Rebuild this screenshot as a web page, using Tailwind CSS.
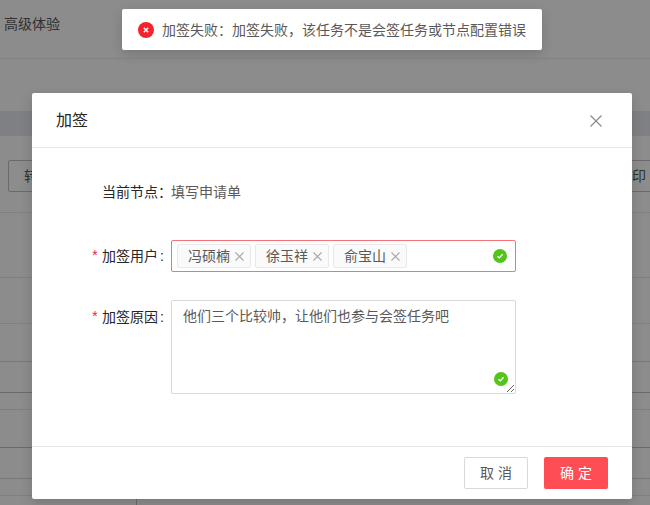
<!DOCTYPE html>
<html lang="zh-CN">
<head>
    <meta charset="UTF-8">
    <title>加签</title>
    <script src="https://cdn.jsdelivr.net/npm/@tailwindcss/browser@4"></script>
</head>
<body class="relative h-[505px] w-[650px] overflow-hidden bg-white font-['Liberation_Sans','Noto_Sans_CJK_SC',sans-serif] text-sm text-[#595959]">
    <!-- page behind the mask -->
    <div class="flex h-[505px] flex-col">
        <div class="h-[59px] border-b border-[#f0f0f0] pl-1 pt-[14px] leading-5">高级体验</div>
        <div class="mt-[52px] h-[25px] bg-[#e6eaee]"></div>
        <div class="flex h-[77px] items-start justify-between border-b border-[#e8e8e8] pt-6">
            <div class="ml-2 h-8 w-[100px] rounded-[2px] border border-[#c4c4c4] pl-[15px] leading-[30px]">转</div>
            <div class="h-8 w-[100px] whitespace-nowrap border-y border-[#c4c4c4] pr-1 text-right leading-[30px]">印</div>
        </div>
        <div class="h-[65px] border-b border-[#e8e8e8]"></div>
        <div class="h-[46px] border-b border-[#e8e8e8]"></div>
        <div class="h-[38px] border-b border-[#d9d9d9]"></div>
        <div class="h-[31px] border-b border-[#c4c4c4]"></div>
        <div class="h-[17px] border-b border-[#e8e8e8]"></div>
        <div class="h-[38px] border-b border-[#c4c4c4]"></div>
        <div class="h-[31px] border-b border-[#d9d9d9]"></div>
        <div class="h-[17px] border-b border-[#e8e8e8]"></div>
        <div class="ml-[136px] flex-1 border-l border-[#c4c4c4]"></div>
    </div>

    <!-- mask -->
    <div class="absolute inset-0 bg-black/45"></div>

    <!-- modal -->
    <div class="absolute left-[32px] top-[93px] flex h-[406px] w-[600px] flex-col rounded-[2px] bg-white shadow-[0_4px_12px_rgba(0,0,0,0.15)]">
        <div class="flex h-[55px] items-center justify-between border-b border-[#e8e8e8] pl-6 pr-[30px]">
            <span class="pt-0.5 text-base text-[#262626]">加签</span>
            <svg class="mt-0.5 h-[12px] w-[12px] text-[#8c8c8c]" viewBox="0 0 12 12" fill="none" stroke="currentColor" stroke-width="1.3"><path d="M0.5 0.5L11.5 11.5M11.5 0.5L0.5 11.5"/></svg>
        </div>

        <div class="flex-1 pt-7">
            <div class="mb-8 flex h-8 items-center">
                <div class="-mr-px w-[140px] text-right text-[#262626]">当前节点：</div>
                <div>填写申请单</div>
            </div>

            <div class="mb-7 flex h-8 items-center">
                <div class="w-[139px] pr-[7px] text-right text-[#262626]"><span class="mr-[3px] font-['Liberation_Mono',monospace] text-[#f5222d]">*</span>加签用户<span class="ml-0.5">:</span></div>
                <div class="relative flex h-8 w-[345px] items-center gap-1 rounded-[2px] border border-[#f5727a] pl-[5px]">
                    <span class="flex h-6 w-[74px] items-center rounded-[2px] border border-[#e8e8e8] bg-[#fafafa] pl-2.5">冯硕楠
                        <svg class="ml-[5px] h-[9px] w-[9px] text-[#a6a6a6]" viewBox="0 0 9 9" fill="none" stroke="currentColor" stroke-width="1.1"><path d="M0.5 0.5L8.5 8.5M8.5 0.5L0.5 8.5"/></svg>
                    </span>
                    <span class="flex h-6 w-[74px] items-center rounded-[2px] border border-[#e8e8e8] bg-[#fafafa] pl-2.5">徐玉祥
                        <svg class="ml-[5px] h-[9px] w-[9px] text-[#a6a6a6]" viewBox="0 0 9 9" fill="none" stroke="currentColor" stroke-width="1.1"><path d="M0.5 0.5L8.5 8.5M8.5 0.5L0.5 8.5"/></svg>
                    </span>
                    <span class="flex h-6 w-[74px] items-center rounded-[2px] border border-[#e8e8e8] bg-[#fafafa] pl-2.5">俞宝山
                        <svg class="ml-[5px] h-[9px] w-[9px] text-[#a6a6a6]" viewBox="0 0 9 9" fill="none" stroke="currentColor" stroke-width="1.1"><path d="M0.5 0.5L8.5 8.5M8.5 0.5L0.5 8.5"/></svg>
                    </span>
                    <svg class="absolute right-[8px] top-[8px] h-[14px] w-[14px]" viewBox="0 0 14 14"><circle cx="7" cy="7" r="7" fill="#52c41a"/><path d="M4.5 7.2L6.3 8.9L9.6 5.3" fill="none" stroke="#fff" stroke-width="1.3"/></svg>
                </div>
            </div>

            <div class="flex items-start">
                <div class="w-[139px] pr-[7px] pt-[6px] text-right leading-[22px] text-[#262626]"><span class="mr-[3px] font-['Liberation_Mono',monospace] text-[#f5222d]">*</span>加签原因<span class="ml-0.5">:</span></div>
                <div class="relative h-[94px] w-[345px]">
                    <textarea class="block h-[94px] w-[345px] rounded-[2px] border border-[#d9d9d9] px-[11px] py-[5px] leading-[20px] text-[#595959] outline-none">他们三个比较帅，让他们也参与会签任务吧</textarea>
                    <svg class="absolute right-[8px] bottom-[8px] h-[14px] w-[14px]" viewBox="0 0 14 14"><circle cx="7" cy="7" r="7" fill="#52c41a"/><path d="M4.5 7.2L6.3 8.9L9.6 5.3" fill="none" stroke="#fff" stroke-width="1.3"/></svg>
                </div>
            </div>
        </div>

        <div class="flex h-[53px] items-start justify-end gap-4 border-t border-[#e8e8e8] pr-6 pt-[10px]">
            <button class="h-8 w-16 rounded-[2px] border border-[#d9d9d9] bg-white text-[#595959]">取 消</button>
            <button class="h-8 w-16 rounded-[2px] bg-[#ff4d55] text-white">确 定</button>
        </div>
    </div>

    <!-- toast -->
    <div class="absolute left-[122px] top-[9px] flex h-[41px] w-[420px] items-center rounded-[2px] bg-white pl-4 shadow-[0_4px_12px_rgba(0,0,0,0.15)]">
        <svg class="mr-2 h-4 w-4" viewBox="0 0 16 16"><circle cx="8" cy="8" r="8" fill="#f5222d"/><path d="M5.8 5.8L10.2 10.2M10.2 5.8L5.8 10.2" fill="none" stroke="#fff" stroke-width="1.4"/></svg>
        <span>加签失败：加签失败，该任务不是会签任务或节点配置错误</span>
    </div>
</body>
</html>
